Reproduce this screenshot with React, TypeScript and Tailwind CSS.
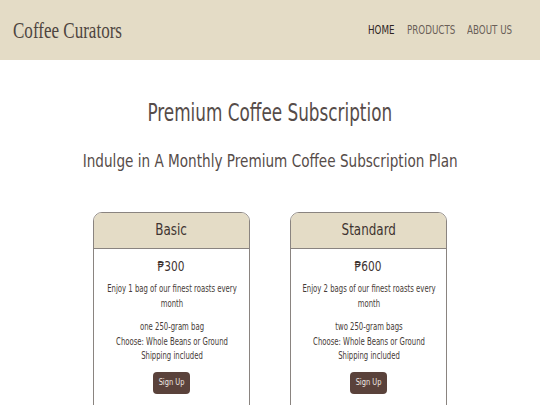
import React from 'react';

const plans = [
  {
    name: 'Basic',
    price: '₱300',
    blurb: 'Enjoy 1 bag of our finest roasts every month',
    items: ['one 250-gram bag', 'Choose: Whole Beans or Ground', 'Shipping included'],
  },
  {
    name: 'Standard',
    price: '₱600',
    blurb: 'Enjoy 2 bags of our finest roasts every month',
    items: ['two 250-gram bags', 'Choose: Whole Beans or Ground', 'Shipping included'],
  },
];

// the reference renders its type narrower than any installed face, so glyphs get squeezed a bit
const PlanCard: React.FC<{ plan: (typeof plans)[number] }> = ({ plan }) => (
  <div className="w-[157px] h-[220px] border border-[#8a8480] rounded-[9px] overflow-hidden bg-white flex flex-col">
    <div className="h-[36px] shrink-0 bg-[#e4dcc6] border-b border-[#8a8480] flex items-center justify-center text-[16px] leading-[20px] text-[#3f3431]">
      <span className="inline-block scale-x-[0.83] -translate-y-[1px]">{plan.name}</span>
    </div>
    <div className="flex flex-col items-center text-center pt-[8px]">
      <div className="text-[14px] text-[#3f3431] leading-[18px]">
        <span className="inline-block scale-x-[0.84]">{plan.price}</span>
      </div>
      <div className="w-[180px] shrink-0 scale-x-[0.8] text-[#463b37]">
        <p className="mt-[6px] text-[9.6px] leading-[15px]">{plan.blurb}</p>
        <div className="mt-[9px] text-[9.6px] leading-[14.5px]">
          {plan.items.map((i) => (
            <div key={i}>{i}</div>
          ))}
        </div>
      </div>
      <button className="mt-[8px] w-[37px] h-[22px] rounded-[4px] bg-[#5a423b] text-[#efe7e2] text-[9.5px] flex items-center justify-center">
        <span className="inline-block scale-x-[0.78] whitespace-nowrap">Sign Up</span>
      </button>
    </div>
  </div>
);

export default function App() {
  return (
    <div className="w-[540px] h-[405px] overflow-hidden bg-white font-['DejaVu_Sans_Condensed','DejaVu_Sans',sans-serif]">
      <header className="h-[60px] bg-[#e4dcc6] flex items-center justify-between pl-[13px] pr-[28px]">
        <div className="font-['Liberation_Serif',serif] text-[24px] text-[#4e4540]">
          <span className="inline-block origin-left scale-x-[0.71] whitespace-nowrap">Coffee Curators</span>
        </div>
        <nav className="flex gap-[13px] text-[12px] text-[#6a5f58] whitespace-nowrap">
          <span className="w-[26px]">
            <span className="inline-block origin-left scale-x-[0.81] text-[#2d2522]">HOME</span>
          </span>
          <span className="w-[47px]">
            <span className="inline-block origin-left scale-x-[0.81]">PRODUCTS</span>
          </span>
          <span className="w-[45px]">
            <span className="inline-block origin-left scale-x-[0.81]">ABOUT US</span>
          </span>
        </nav>
      </header>
      <main className="flex flex-col items-center">
        <h1 className="mt-[37px] text-[24px] leading-[32px] text-[#564c49]">
          <span className="inline-block scale-x-[0.78]">Premium Coffee Subscription</span>
        </h1>
        <h2 className="mt-[20px] text-[18px] leading-[24px] text-[#564c49]">
          <span className="inline-block scale-x-[0.84]">Indulge in A Monthly Premium Coffee Subscription Plan</span>
        </h2>
        <div className="mt-[39px] flex gap-[40px]">
          {plans.map((p) => (
            <PlanCard key={p.name} plan={p} />
          ))}
        </div>
      </main>
    </div>
  );
}
